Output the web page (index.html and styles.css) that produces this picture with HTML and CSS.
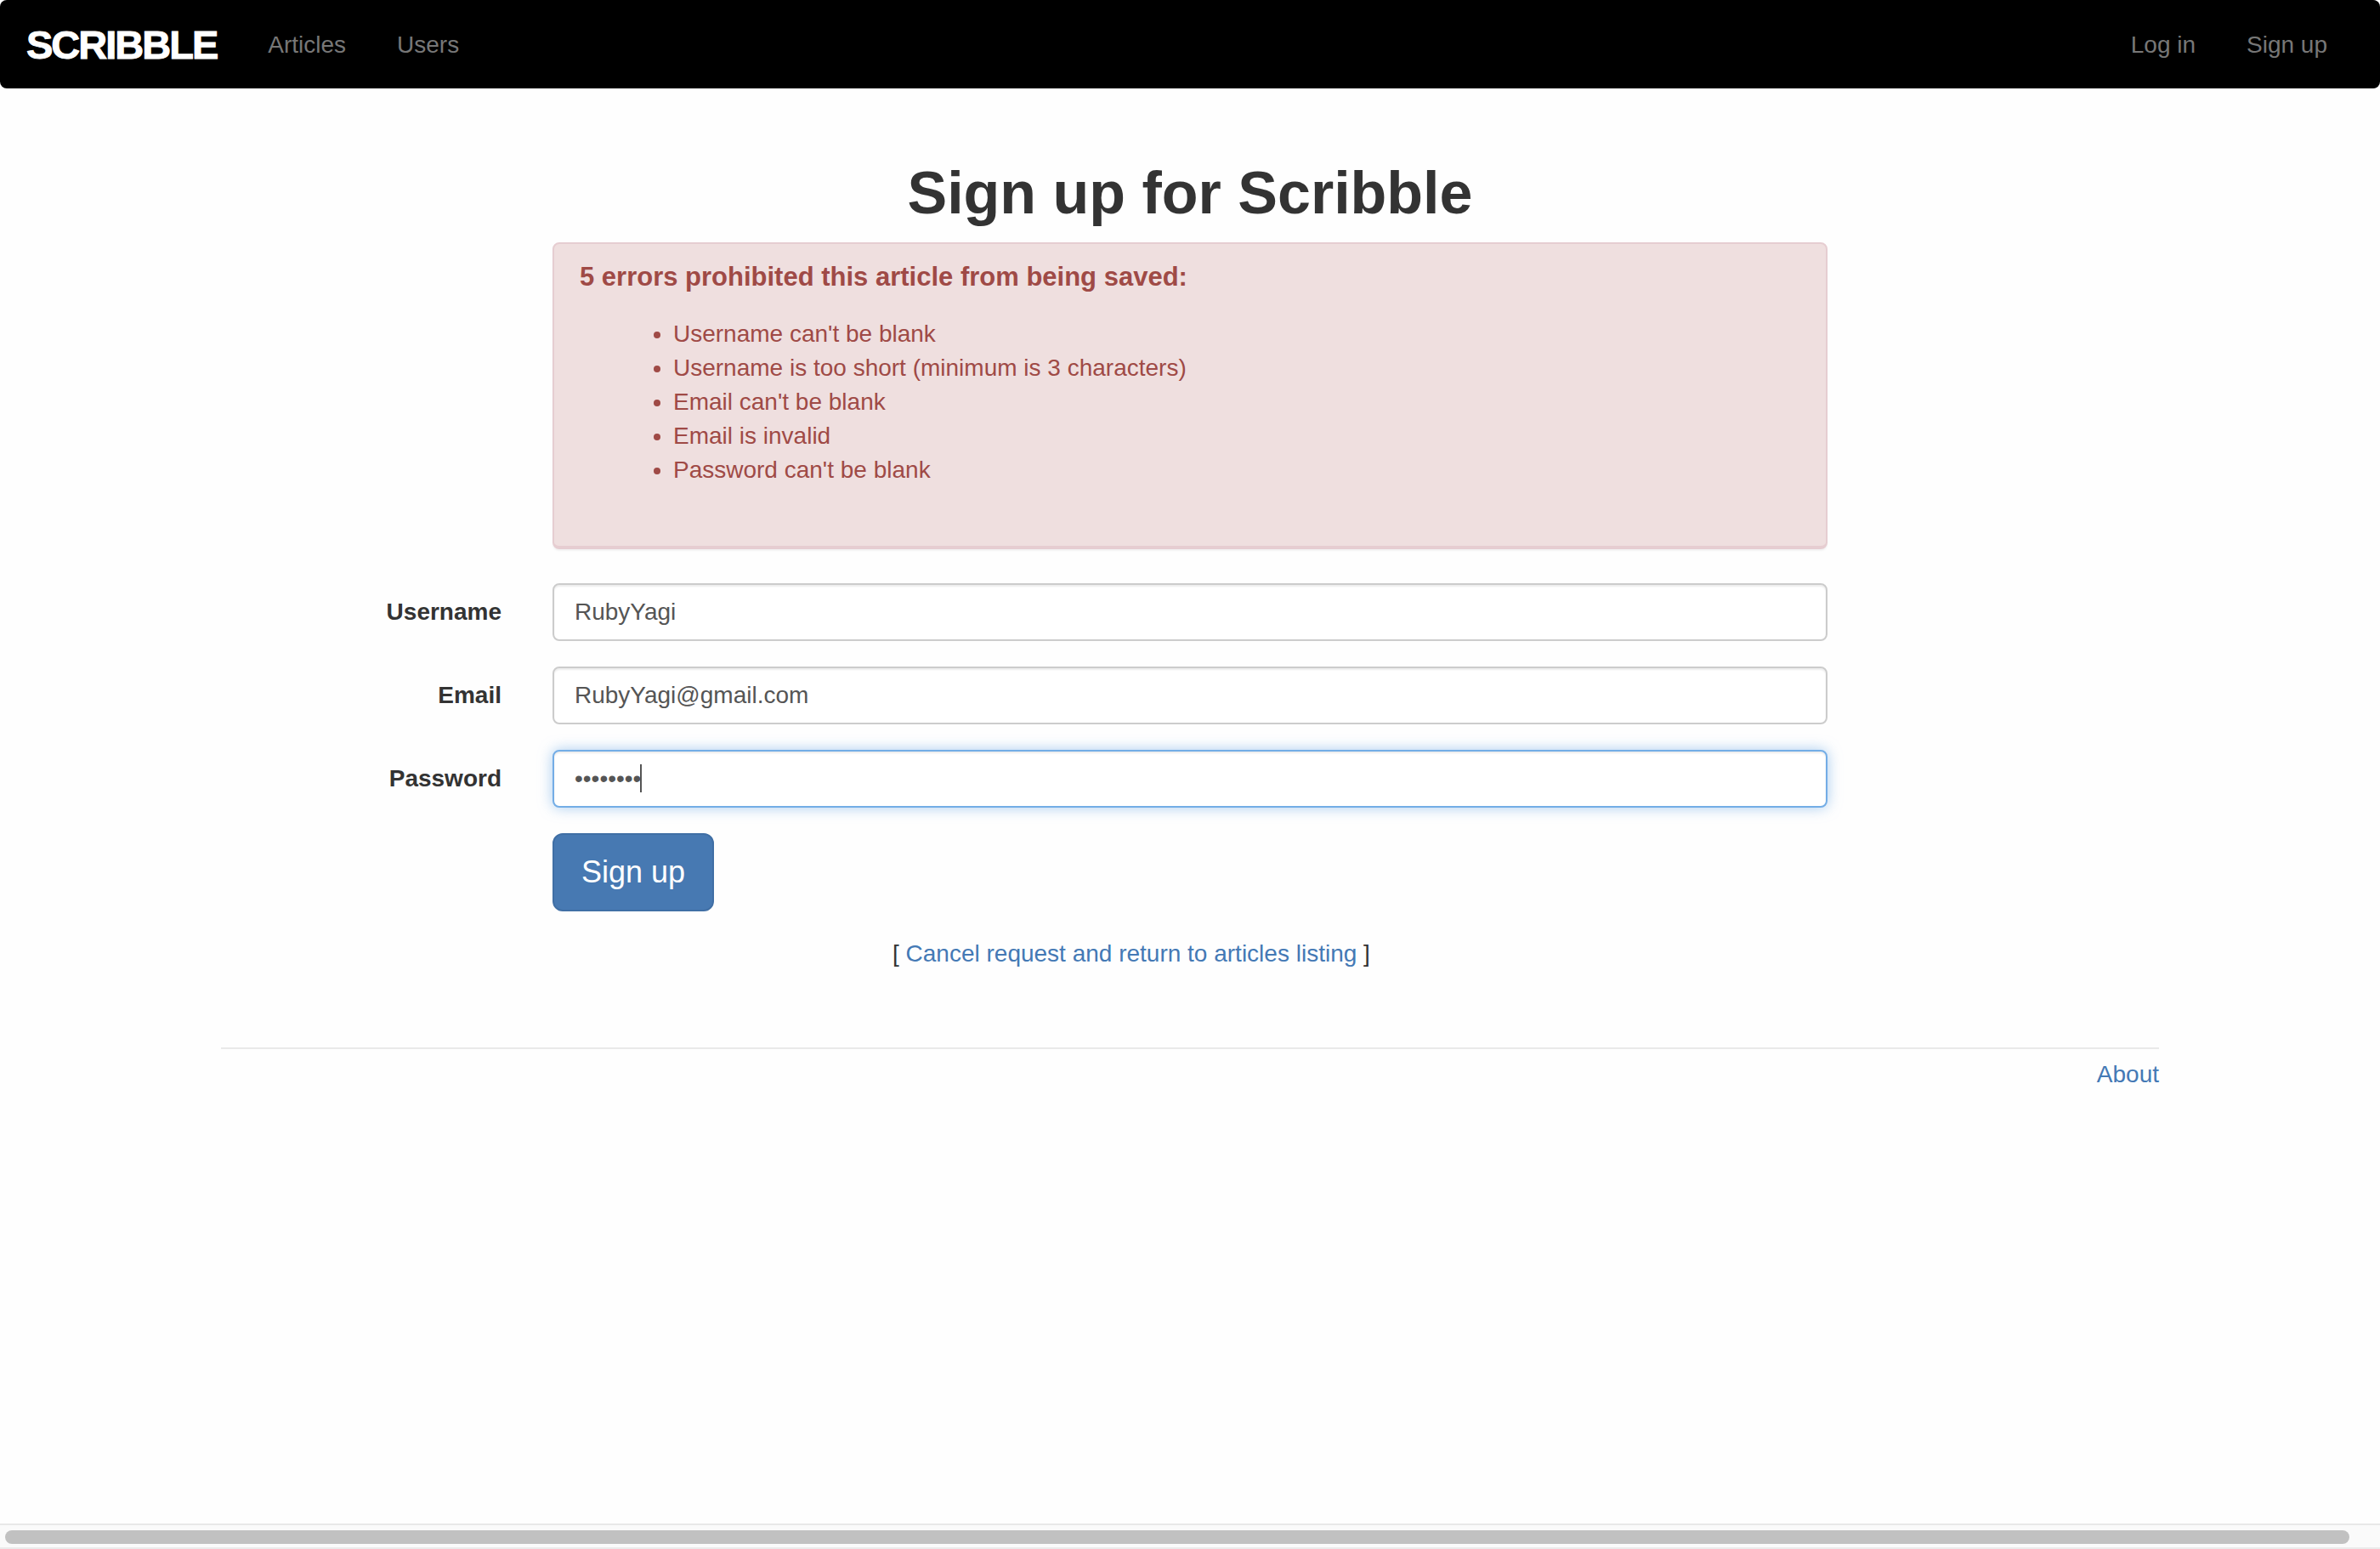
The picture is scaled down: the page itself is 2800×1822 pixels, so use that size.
FILE: index.html
```html
<!DOCTYPE html>
<html lang="en">
<head>
<meta charset="utf-8">
<meta name="viewport" content="width=device-width, initial-scale=1">
<title>Scribble</title>
<link rel="stylesheet" href="styles.css">
</head>
<body>
<header class="navbar">
  <a class="brand" href="#">SCRIBBLE</a>
  <nav class="nav">
    <a href="#">Articles</a>
    <a href="#">Users</a>
  </nav>
  <nav class="nav nav-right">
    <a href="#">Log in</a>
    <a href="#">Sign up</a>
  </nav>
</header>
<main class="container">
  <h1>Sign up for Scribble</h1>
  <div class="row">
    <section class="panel col-field">
      <h2 class="panel-title">5 errors prohibited this article from being saved:</h2>
      <ul class="errors">
        <li>Username can't be blank</li>
        <li>Username is too short (minimum is 3 characters)</li>
        <li>Email can't be blank</li>
        <li>Email is invalid</li>
        <li>Password can't be blank</li>
      </ul>
    </section>
  </div>
  <form class="form">
    <div class="row">
      <label for="username">Username</label>
      <div class="col-field"><input class="control" id="username" type="text" value="RubyYagi"></div>
    </div>
    <div class="row">
      <label for="email">Email</label>
      <div class="col-field"><input class="control" id="email" type="email" value="RubyYagi@gmail.com"></div>
    </div>
    <div class="row">
      <label for="password">Password</label>
      <div class="col-field field-active"><input class="control" id="password" type="password" value="password"><span class="caret"></span></div>
    </div>
    <div class="row">
      <div class="col-field"><button class="btn" type="button">Sign up</button></div>
    </div>
    <div class="row">
      <p class="cancel">[ <a href="#">Cancel request and return to articles listing</a> ]</p>
    </div>
  </form>
  <footer class="footer"><a href="#">About</a></footer>
</main>
<div class="scrollbar"><div class="thumb"></div></div>
</body>
</html>
```
FILE: styles.css
```css
* {
  box-sizing: border-box;
}

body {
  display: flex;
  flex-direction: column;
  min-height: 100vh;
  margin: 0;
  background: #fefefe;
  color: #333;
  font-family: "Liberation Sans", Arial, sans-serif;
  font-size: 28px;
  line-height: 40px;
}

a {
  color: #4479b5;
  text-decoration: none;
}

.navbar {
  display: flex;
  align-items: center;
  min-height: 104px;
  padding: 1px 32px 0 31px;
  border-radius: 8px;
  background: #000;
}

.brand {
  margin-right: 30px;
  color: #fff;
  font-size: 47px;
  font-weight: bold;
  letter-spacing: -2px;
  -webkit-text-stroke: 1px #fff;
}

.nav {
  display: flex;
}

.nav a {
  padding: 30px;
  color: #777;
}

.nav-right {
  margin-left: auto;
}

.container {
  width: 100%;
  max-width: 2340px;
  margin: 0 auto;
  padding: 0 30px;
}

h1 {
  margin: 85px 0 20px;
  font-size: 70px;
  line-height: 76px;
  text-align: center;
}

.row {
  display: grid;
  grid-template-columns: 2fr 8fr 2fr;
  margin: 0 -30px 30px;
}

.col-field {
  grid-column: 2;
  margin: 0 30px;
}

.panel {
  margin-bottom: 10px;
  border: 2px solid #e6cdd1;
  border-bottom-width: 4px;
  border-radius: 8px;
  background: #efdfdf;
  color: #9f4a46;
  box-shadow: 0 2px 2px rgba(0, 0, 0, 0.05);
}

.panel-title {
  margin: 21px 30px 30px;
  font-size: 31px;
  line-height: 35px;
}

.errors {
  margin: 0 30px 69px;
  padding-left: 110px;
}

label {
  grid-column: 1;
  padding: 14px 30px;
  font-weight: bold;
  text-align: right;
}

.control {
  display: block;
  width: 100%;
  height: 68px;
  padding: 12px 24px;
  border: 2px solid #ccc;
  border-radius: 8px;
  outline: 0;
  background: #fff;
  box-shadow: inset 0 2px 2px rgba(0, 0, 0, 0.075);
  color: #555;
  font: inherit;
}

.field-active {
  position: relative;
}

.field-active .control {
  border-color: #73ade6;
  box-shadow: inset 0 2px 2px rgba(0, 0, 0, 0.075), 0 0 16px rgba(110, 170, 230, 0.6);
}

.caret {
  position: absolute;
  top: 17px;
  left: 103px;
  width: 2px;
  height: 33px;
  background: #555;
}

.btn {
  display: block;
  padding: 20px 32px;
  border: 2px solid #406fa5;
  border-radius: 12px;
  background: #4779b2;
  color: #fff;
  font-family: inherit;
  font-size: 36px;
  line-height: 48px;
}

.cancel {
  grid-column: 2;
  margin: 0 0 0 430px;
}

.footer {
  margin-top: 90px;
  padding-top: 10px;
  border-top: 2px solid #e9e9e9;
  text-align: right;
}

.form .row:last-child {
  margin-bottom: 0;
}

.scrollbar {
  margin-top: auto;
  padding: 6px 36px 4px 6px;
  border-top: 2px solid #e8e8e8;
  border-bottom: 2px solid #ebebeb;
  background: #fafafa;
}

.thumb {
  height: 16px;
  border-radius: 8px;
  background: #c1c1c1;
}
```
